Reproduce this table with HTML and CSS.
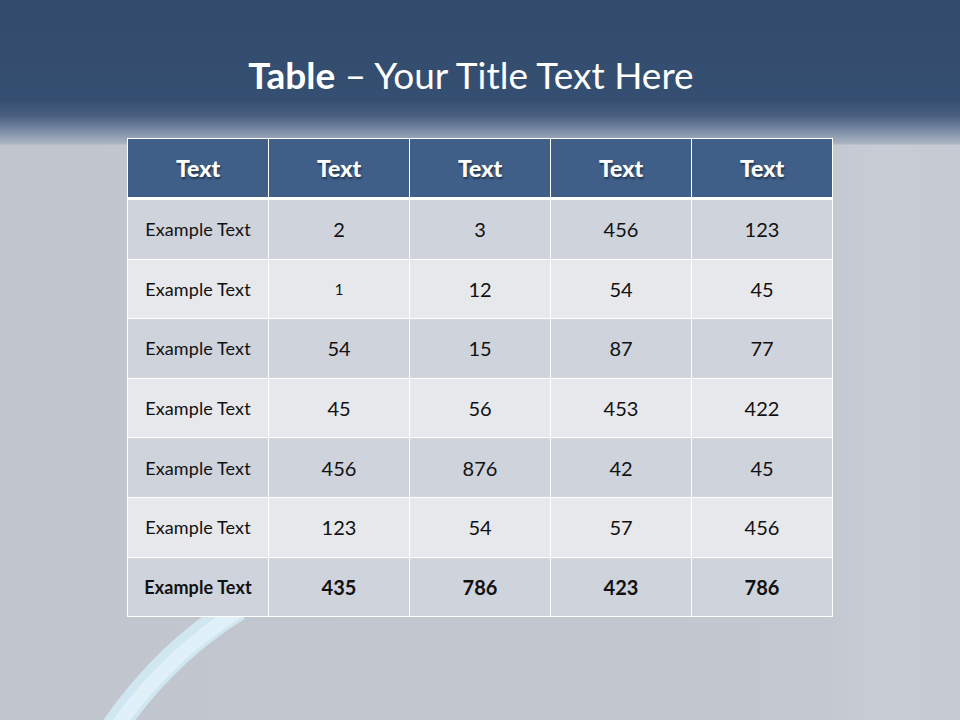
FILE: index.html
```html
<!DOCTYPE html>
<html>
<head>
<meta charset="utf-8">
<link rel="stylesheet" href="styles.css">
</head>
<body>
<div class="slide">
  <svg class="arc" width="960" height="720" viewBox="0 0 960 720">
    <path d="M 112 730 Q 166 652 238 608" fill="none" stroke="#d0e6f0" stroke-width="26"/>
    <path d="M 114 730 Q 168 654 240 610" fill="none" stroke="#dff0f8" stroke-width="14"/>
  </svg>
  <h1 class="title"><b>Table</b> – Your Title Text Here</h1>
  <table class="grid">
    <thead>
      <tr><th>Text</th><th>Text</th><th>Text</th><th>Text</th><th>Text</th></tr>
    </thead>
    <tbody>
      <tr class="odd"><td class="label">Example Text</td><td>2</td><td>3</td><td>456</td><td>123</td></tr>
      <tr class="even"><td class="label">Example Text</td><td class="small">1</td><td>12</td><td>54</td><td>45</td></tr>
      <tr class="odd"><td class="label">Example Text</td><td>54</td><td>15</td><td>87</td><td>77</td></tr>
      <tr class="even"><td class="label">Example Text</td><td>45</td><td>56</td><td>453</td><td>422</td></tr>
      <tr class="odd"><td class="label">Example Text</td><td>456</td><td>876</td><td>42</td><td>45</td></tr>
      <tr class="even"><td class="label">Example Text</td><td>123</td><td>54</td><td>57</td><td>456</td></tr>
      <tr class="odd total"><td class="label">Example Text</td><td>435</td><td>786</td><td>423</td><td>786</td></tr>
    </tbody>
  </table>
</div>
</body>
</html>
```
FILE: styles.css
```css
html, body {
  margin: 0;
  padding: 0;
}
body {
  width: 960px;
  height: 720px;
  overflow: hidden;
  font-family: Lato, "Open Sans", sans-serif;
}
.slide {
  position: relative;
  width: 960px;
  height: 720px;
  display: flex;
  flex-direction: column;
  align-items: center;
  background:
    linear-gradient(to bottom, #324b6c 0px, #354f72 100px, #4a5f80 116px, #8090a8 132px, #adb5c2 144px, rgba(0,0,0,0) 145px),
    linear-gradient(to right, #c1c5cd 0px, #c3c7cf 820px, #c8ccd5 880px, #c6cad2 960px),
    #c2c6ce;
  background-size: 960px 146px, 960px 720px;
  background-repeat: no-repeat;
}
.arc {
  position: absolute;
  left: 0;
  top: 0;
}
.title {
  position: relative;
  margin: 55px 18px 0 0;
  height: 40px;
  line-height: 40px;
  font-size: 37px;
  font-weight: 400;
  color: #ffffff;
}
.title b {
  font-weight: 700;
}
.grid {
  position: relative;
  margin-top: 43px;
  border-collapse: collapse;
  width: 706px;
  table-layout: fixed;
}
.grid th, .grid td {
  border: 1px solid #ffffff;
  text-align: center;
  padding: 0;
  color: #111111;
}
.grid th {
  height: 58px;
  background: #3f5f89;
  color: #ffffff;
  font-size: 23px;
  font-weight: 900;
  text-shadow: 1px 2px 2px rgba(0,0,0,0.45);
  border-bottom: 3px solid #ffffff;
}
.grid td {
  height: 58.6px;
  font-size: 20px;
}
.grid td.label {
  font-size: 18px;
  letter-spacing: 0.1px;
}
.grid td.small {
  font-size: 15px;
}
.odd td {
  background: #cfd3dc;
}
.even td {
  background: #e7e8ec;
}
.total td {
  font-weight: 700;
}
```
